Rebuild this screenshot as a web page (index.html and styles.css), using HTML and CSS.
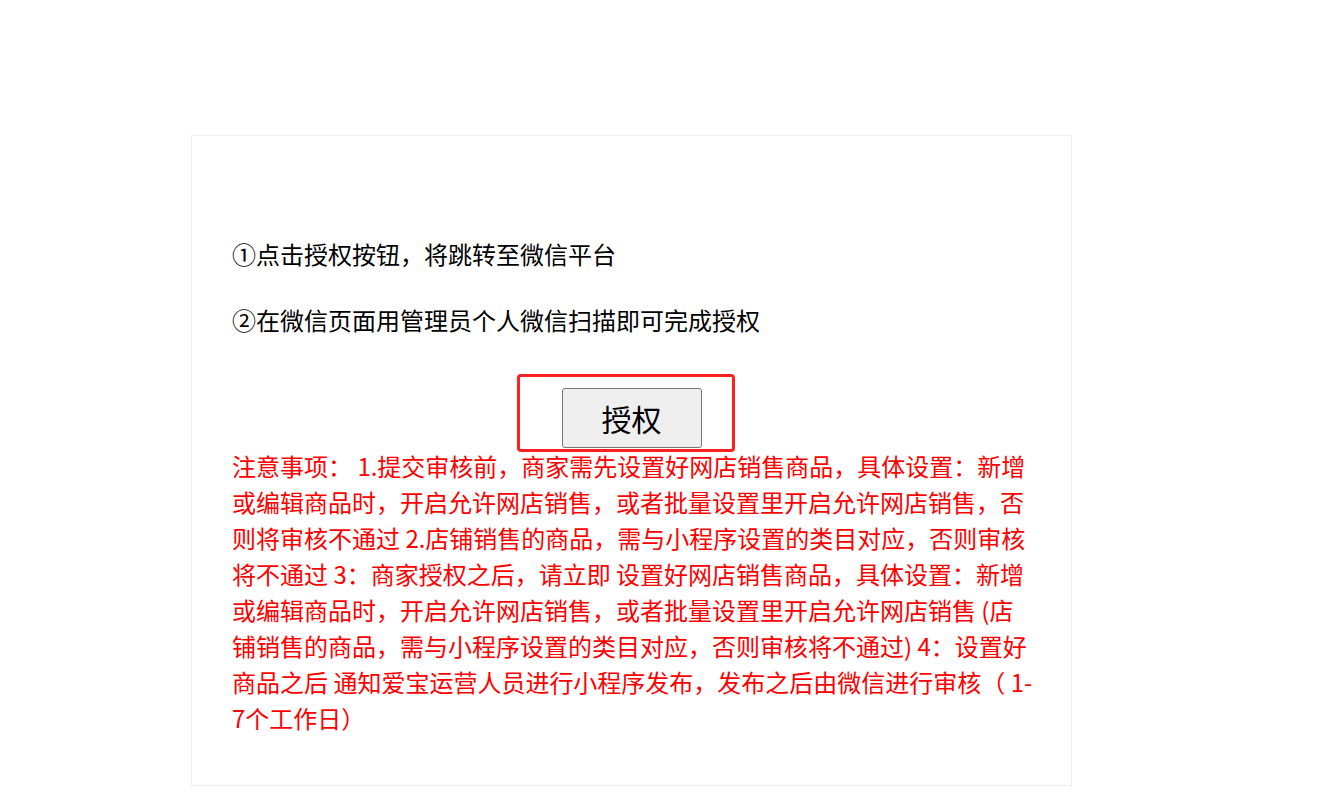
FILE: index.html
```html
<!DOCTYPE html>
<html lang="zh-CN">
<head>
<meta charset="utf-8">
<title>授权</title>
<link rel="stylesheet" href="styles.css">
</head>
<body>
<div class="card">
  <p class="step">①点击授权按钮，将跳转至微信平台</p>
  <p class="step">②在微信页面用管理员个人微信扫描即可完成授权</p>
  <div class="btn-row">
    <div class="btn-wrap">
      <button class="auth-btn" type="button">授权</button>
      <span class="highlight"></span>
    </div>
  </div>
  <div class="notice">注意事项： 1.提交审核前，商家需先设置好网店销售商品，具体设置：新增或编辑商品时，开启允许网店销售，或者批量设置里开启允许网店销售，否则将审核不通过 2.店铺销售的商品，需与小程序设置的类目对应，否则审核将不通过 3：商家授权之后，请立即 设置好网店销售商品，具体设置：新增或编辑商品时，开启允许网店销售，或者批量设置里开启允许网店销售 (店铺销售的商品，需与小程序设置的类目对应，否则审核将不通过) 4：设置好商品之后 通知爱宝运营人员进行小程序发布，发布之后由微信进行审核（ 1-7个工作日）</div>
</div>
</body>
</html>
```

FILE: styles.css
```css
html, body {
  margin: 0;
  padding: 0;
  background: #ffffff;
}

body {
  font-family: "Noto Sans CJK SC", "Noto Sans", sans-serif;
  padding-top: 135px;
}

.card {
  box-sizing: border-box;
  width: 881px;
  margin-left: 191px;
  border: 1px solid #eeeeee;
  padding: 100px 37px 49px 40px;
}

.step {
  margin: 0 0 30px 0;
  font-size: 24px;
  line-height: 36px;
  color: #000000;
}

.btn-row {
  display: flex;
  justify-content: center;
  padding-top: 20px;
  padding-right: 3px;
}

.btn-wrap {
  position: relative;
}

.auth-btn {
  display: block;
  width: 140px;
  height: 60px;
  margin: 0;
  padding: 0;
  box-sizing: border-box;
  background: #efefef;
  border: 1px solid #767676;
  border-radius: 3px;
  font-family: "Noto Sans CJK SC", "Noto Sans", sans-serif;
  font-size: 30px;
  color: #000000;
}

.highlight {
  position: absolute;
  left: -45px;
  top: -14px;
  width: 218px;
  height: 78px;
  box-sizing: border-box;
  border: 3px solid #ff2020;
  border-radius: 4px;
}

.notice {
  font-size: 24px;
  line-height: 36px;
  color: #ff0000;
}
```
